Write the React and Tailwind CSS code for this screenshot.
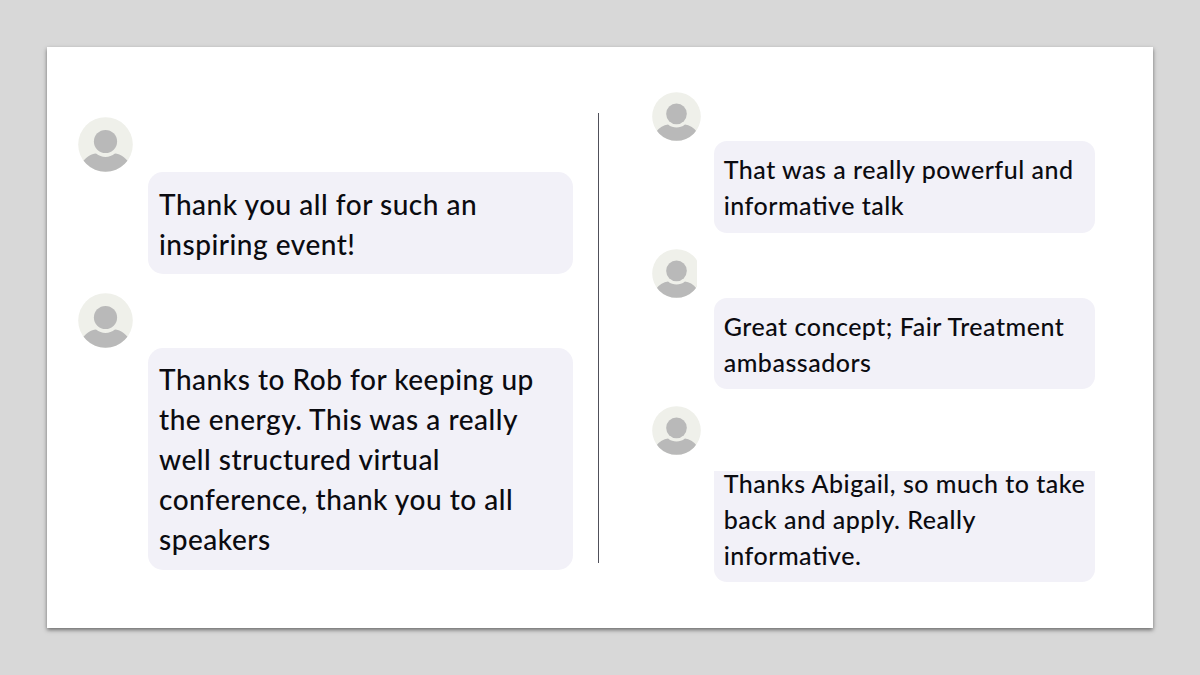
import clsx from "clsx";

const leftMessages = [
  { lines: ["Thank you all for such an", "inspiring event!"], box: "h-[102px] pt-[12px]", gap: "mb-[19px]" },
  {
    lines: [
      "Thanks to Rob for keeping up",
      "the energy. This was a really",
      "well structured virtual",
      "conference, thank you to all",
      "speakers",
    ],
    box: "h-[222px] pt-[11px]",
    gap: "",
  },
];

const rightMessages = [
  { lines: ["That was a really powerful and", "informative talk"], height: "h-[92px]", gap: "mb-4" },
  { lines: ["Great concept; Fair Treatment", "ambassadors"], height: "h-[91px]", gap: "mb-[17px]", cutAvatar: true },
  {
    lines: ["Thanks Abigail, so much to take", "back and apply. Really", "informative."],
    height: "h-[111px]",
    gap: "",
    flatTop: true,
  },
];

function Avatar({ className }) {
  return (
    <svg viewBox="0 0 55 55" className={clsx("block", className)}>
      <defs>
        <clipPath id="face">
          <circle cx="27.5" cy="27.5" r="27.3" />
        </clipPath>
      </defs>
      <g clipPath="url(#face)">
        <rect width="55" height="55" fill="#eff0ea" />
        <circle cx="27.5" cy="24.5" r="11.6" fill="#b9b9b9" />
        <path d="M4 45.5 C8.5 39.8 13 37 18 36.6 C21 39.1 24 39.9 27.5 39.9 C31 39.9 34 39.1 37 36.6 C42 37 46.5 39.8 51 45.5 L51 56 L4 56 Z" fill="#b9b9b9" />
      </g>
    </svg>
  );
}

function LeftMessage({ msg }) {
  return (
    <div className={msg.gap}>
      <Avatar className="-ml-px h-[55px] w-[55px]" />
      <div className={clsx("ml-[69px] w-[425px] rounded-[15px] bg-[#f2f1f8] pl-[11px] text-[28px] leading-[40px] whitespace-nowrap", msg.box)}>
        {msg.lines.map((line) => (
          <p key={line}>{line}</p>
        ))}
      </div>
    </div>
  );
}

function RightMessage({ msg }) {
  return (
    <div className={msg.gap}>
      <div className={clsx("h-[49px] overflow-hidden", msg.cutAvatar ? "w-[45px]" : "w-[49px]")}>
        <Avatar className="h-[49px] w-[49px]" />
      </div>
      <div
        className={clsx(
          "ml-[62px] flow-root w-[381px] bg-[#f2f1f8] pl-[10px] text-[25px] leading-[36px] whitespace-nowrap",
          msg.flatTop ? "mt-4 rounded-b-[13px]" : "rounded-[13px] pt-[10px]",
          msg.height
        )}
      >
        <div className={msg.flatTop ? "-mt-[6px]" : ""}>
          {msg.lines.map((line) => (
            <p key={line}>{line}</p>
          ))}
        </div>
      </div>
    </div>
  );
}

export default function App() {
  return (
    <div className="h-[675px] w-[1200px] overflow-hidden bg-[#d8d8d8] p-[47px] font-['Lato',sans-serif] font-medium tracking-[0.51px] text-[#0b0b10] [font-feature-settings:'liga'_1]">
      <div className="flex h-[581px] w-[1106px] bg-white shadow-[0_2px_4px_0px_rgba(0,0,0,0.5)]">
        {/* Left column */}
        <div className="w-[551px] pl-8 pt-[70px]">
          {leftMessages.map((msg) => (
            <LeftMessage key={msg.lines[0]} msg={msg} />
          ))}
        </div>

        <div className="mt-[66px] h-[450px] w-px bg-[#50505a]" />

        {/* Right column */}
        <div className="pl-[52.7px] pt-[45px]">
          {rightMessages.map((msg) => (
            <RightMessage key={msg.lines[0]} msg={msg} />
          ))}
        </div>
      </div>
    </div>
  );
}
